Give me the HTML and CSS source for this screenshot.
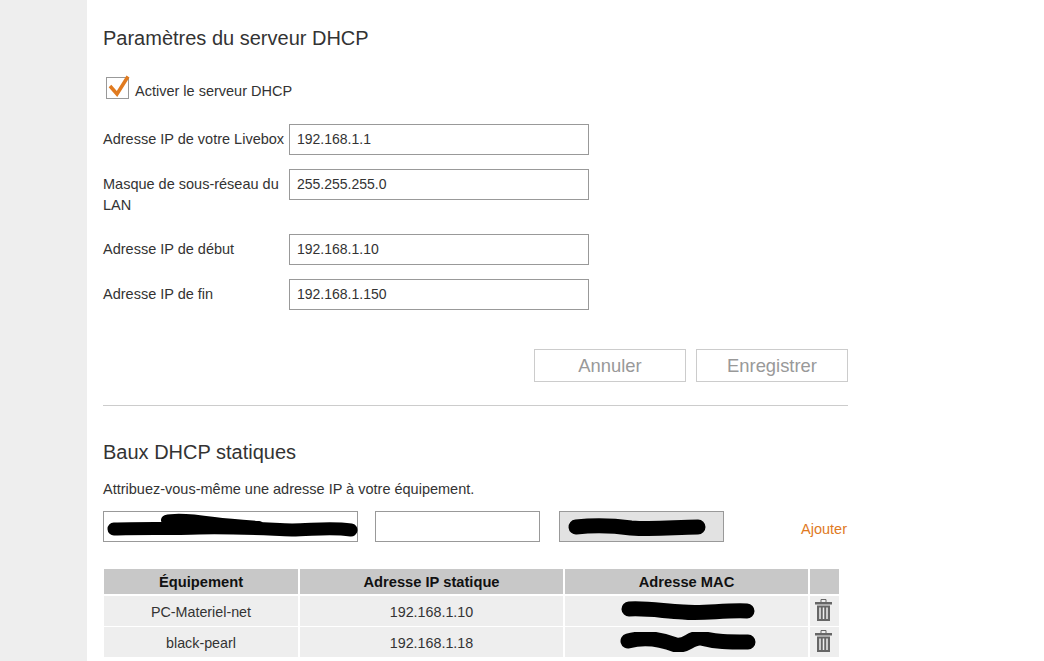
FILE: index.html
```html
<!DOCTYPE html>
<html lang="fr">
<head>
<meta charset="utf-8">
<title>Paramètres du serveur DHCP</title>
<link rel="stylesheet" href="styles.css">
</head>
<body>
<main class="panel">
  <h2 class="title first">Paramètres du serveur DHCP</h2>
  <label class="check-row">
    <span class="check">
      <svg viewBox="0 0 24 24" width="24" height="24"><path d="M4 11 L11 19 L22 1.500" fill="none" stroke="#e07a1f" stroke-width="3.500"/></svg>
    </span>
    <span>Activer le serveur DHCP</span>
  </label>
  <div class="form">
    <div class="field h30"><span class="lab">Adresse IP de votre Livebox</span><span class="input">192.168.1.1</span></div>
    <div class="field h51"><span class="lab">Masque de sous-réseau du LAN</span><span class="input">255.255.255.0</span></div>
    <div class="field h30"><span class="lab">Adresse IP de début</span><span class="input">192.168.1.10</span></div>
    <div class="field h30"><span class="lab">Adresse IP de fin</span><span class="input">192.168.1.150</span></div>
  </div>
  <div class="actions">
    <span class="btn">Annuler</span>
    <span class="btn">Enregistrer</span>
  </div>
  <hr class="rule">
  <h2 class="title">Baux DHCP statiques</h2>
  <p class="intro">Attribuez-vous-même une adresse IP à votre équipement.</p>
  <div class="add-row">
    <span class="box b1">
      <svg viewBox="0 0 253 29" width="253" height="29"><path d="M10 17 C35 16 65 17 95 16 C125 15 160 17 188 18 C208 18 225 15 247 18" fill="none" stroke="#000" stroke-width="13" stroke-linecap="round"/><path d="M62 8 C72 5 90 7 110 10 C125 12 140 13 155 14" fill="none" stroke="#000" stroke-width="10" stroke-linecap="round"/></svg>
    </span>
    <span class="box b2"></span>
    <span class="box b3">
      <svg viewBox="0 0 163 29" width="163" height="29"><path d="M16 15 C36 13 56 14 71 16 C96 18 116 15 138 15" fill="none" stroke="#000" stroke-width="15" stroke-linecap="round"/></svg>
    </span>
    <a class="add">Ajouter</a>
  </div>
  <table class="leases">
    <thead>
      <tr><th class="c1">Équipement</th><th class="c2">Adresse IP statique</th><th class="c3">Adresse MAC</th><th class="c4"></th></tr>
    </thead>
    <tbody>
      <tr>
        <td>PC-Materiel-net</td><td>192.168.1.10</td>
        <td class="mac"><svg viewBox="0 0 140 20" width="140" height="20"><path d="M11 8 C30 7 45 10 65 11 C85 13 105 9 129 10" fill="none" stroke="#000" stroke-width="15" stroke-linecap="round"/></svg></td>
        <td class="trash">
          <svg viewBox="0 0 17 22" width="17" height="22"><path d="M6 .5h5v3M6 .5v3" fill="none" stroke="#666"/><path d="M0 3h17v2.500H0z" fill="#666"/><path d="M2 6.500h13V22H2z" fill="#666"/><path d="M5 8.500v11.500M8.500 8.500v11.500M12 8.500v11.500" stroke="#eee" stroke-width="1.500"/></svg>
        </td>
      </tr>
      <tr>
        <td>black-pearl</td><td>192.168.1.18</td>
        <td class="mac"><svg viewBox="0 0 140 20" width="140" height="20"><path d="M10 9 C25 5 40 6 58 13 C68 15 73 5 83 6 C98 10 110 10 130 10" fill="none" stroke="#000" stroke-width="15" stroke-linecap="round"/></svg></td>
        <td class="trash">
          <svg viewBox="0 0 17 22" width="17" height="22"><path d="M6 .5h5v3M6 .5v3" fill="none" stroke="#666"/><path d="M0 3h17v2.500H0z" fill="#666"/><path d="M2 6.500h13V22H2z" fill="#666"/><path d="M5 8.500v11.500M8.500 8.500v11.500M12 8.500v11.500" stroke="#eee" stroke-width="1.500"/></svg>
        </td>
      </tr>
    </tbody>
  </table>
</main>
</body>
</html>
```
FILE: styles.css
```css
* { box-sizing: border-box; }
html, body { margin: 0; height: 661px; overflow: hidden; background: #fff; }
body {
  font-family: "Liberation Sans", Arial, sans-serif;
  font-size: 14.5px;
  color: #333;
  padding-left: 87px;
  background: linear-gradient(to right, #eee 87px, #fff 87px);
}
.panel { width: 761px; padding: 0 0 0 16px; }
.title { margin: 0; font-size: 20px; font-weight: 400; line-height: 24px; color: #333; }
.title.first { padding-top: 26px; }
.check-row { display: flex; align-items: center; margin: 26px 0 0 3px; height: 23px; gap: 6px; }
.check {
  width: 23px; height: 22px; border: 1px solid #999; display: block; position: relative;
}
.check svg { position: absolute; left: -1px; top: -3px; overflow: visible; }
.check + span { position: relative; top: 3px; }
.form { margin-top: 25px; display: flex; flex-direction: column; }
.field { display: flex; width: 486px; }
.h30 { height: 31px; margin-bottom: 14px; }
.h51 { height: 51px; margin-bottom: 14px; }
.lab { width: 186px; line-height: 21px; padding-top: 5px; padding-right: 4px; }
.input {
  width: 300px; height: 31px; border: 1px solid #999; padding: 0 7px;
  font-size: 14px; line-height: 29px; color: #333; background: #fff;
}
.actions { display: flex; justify-content: flex-end; gap: 10px; width: 745px; margin-top: 25px; }
.btn {
  width: 152px; height: 33px; border: 1px solid #ccc; color: #999;
  font-size: 18.4px; line-height: 31px; text-align: center;
}
.rule { width: 745px; margin: 23px 0 0; border: 0; border-top: 1px solid #ccc; }
.rule + .title { margin-top: 34px; }
.intro { margin: 16px 0 0; line-height: 18px; }
.add-row { display: flex; align-items: center; width: 745px; margin-top: 13px; height: 31px; }
.box { display: block; height: 31px; border: 1px solid #999; }
.box svg { display: block; overflow: visible; }
.b1 { width: 255px; margin-right: 17px; }
.b2 { width: 165px; margin-right: 19px; }
.b3 { width: 165px; background: #e2e2e2; }
.add { margin-left: auto; margin-right: 1px; color: #e07a1f; position: relative; top: 2px; }
.leases {
  margin: 27px 0 0 1px; border-collapse: separate; border-spacing: 0; table-layout: fixed;
  width: 737px; text-align: center;
}
.leases th {
  background: #c8c8c8; color: #111; font-weight: 700; height: 27px; padding: 1px 0 0;
  border-right: 2px solid #fff; border-bottom: 2px solid #fff; background-clip: padding-box;
  font-size: 14.7px;
}
.leases td {
  background: #eee; height: 31px; padding: 1px 0 0; font-size: 14.3px;
  border-right: 2px solid #fff; border-bottom: 1px solid #fff; background-clip: padding-box;
}
.c1 { width: 196px; }
.c2 { width: 265px; }
.c3 { width: 245px; }
.c4 { width: 31px; }
.mac svg { display: block; margin: 0 auto; position: relative; top: -1px; left: 1px; }
.trash svg { display: block; margin: 0 auto; position: relative; top: -2px; left: -1px; }
```
